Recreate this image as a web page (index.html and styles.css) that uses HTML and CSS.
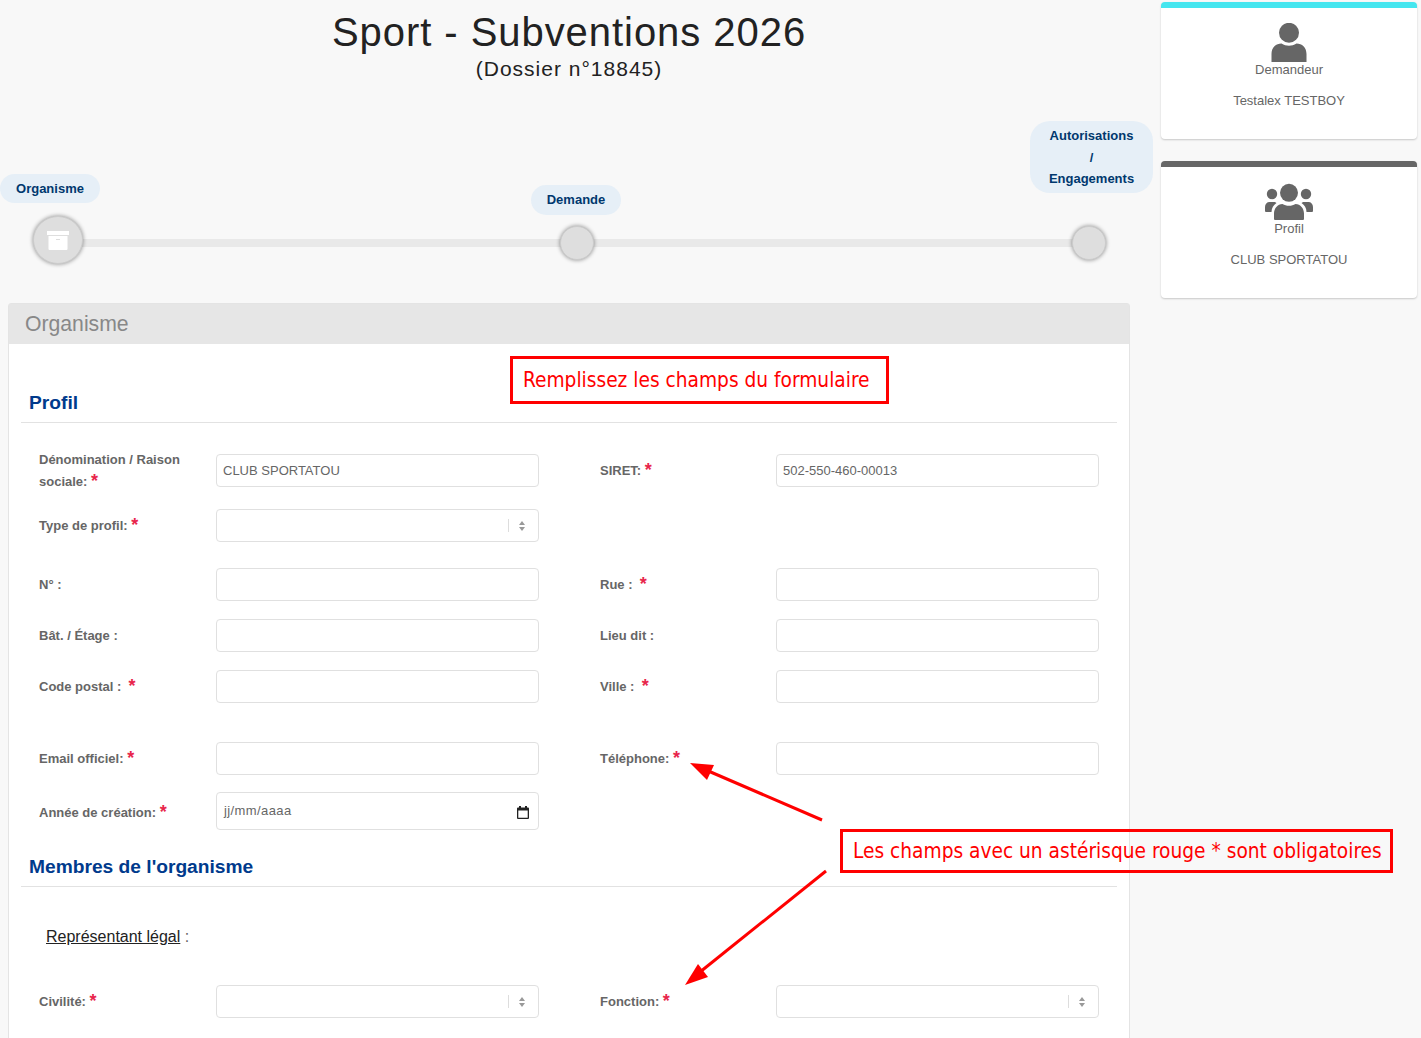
FILE: index.html
```html
<!DOCTYPE html>
<html lang="fr">
<head>
<meta charset="utf-8">
<title>Sport - Subventions 2026</title>
<link rel="stylesheet" href="styles.css">
</head>
<body>
<div class="page">
  <main class="main">
    <header class="head">
      <h1>Sport - Subventions 2026</h1>
      <p>(Dossier n°18845)</p>
    </header>
    <div class="stepper">
      <div class="track"></div>
      <div class="step step-one">
        <span class="pill">Organisme</span>
        <span class="dot dot-big">
          <svg width="22" height="19" viewBox="0 0 22 19"><path fill="#fff" d="M0 0h22v4H0zM1.500 5h19v13a1 1 0 0 1-1 1h-17a1 1 0 0 1-1-1z"/><path fill="#ddd" d="M9 8h4v1H9z"/></svg>
        </span>
      </div>
      <div class="step step-two">
        <span class="pill">Demande</span>
        <span class="dot"></span>
      </div>
      <div class="step step-three">
        <span class="pill">Autorisations<br>/<br>Engagements</span>
        <span class="dot"></span>
      </div>
    </div>
    <section class="card">
      <div class="card-head">Organisme</div>
      <div class="card-body">
        <h2 class="sect sect-first">Profil</h2>
        <div class="row row-first">
          <label class="label-two">Dénomination / Raison sociale: <b>*</b></label>
          <input class="field" value="CLUB SPORTATOU">
          <label class="second">SIRET: <b>*</b></label>
          <input class="field last" value="502-550-460-00013">
        </div>
        <div class="row gap16">
          <label>Type de profil: <b>*</b></label>
          <div class="field select"><i></i><svg width="6" height="10" viewBox="0 0 6 10"><path fill="#999" d="M3 0l3 4H0zM3 10L0 6h6z"/></svg></div>
        </div>
        <div class="row gap26">
          <label>N° :</label>
          <input class="field">
          <label class="second">Rue : &nbsp;<b>*</b></label>
          <input class="field last">
        </div>
        <div class="row gap18">
          <label>Bât. / Étage :</label>
          <input class="field">
          <label class="second">Lieu dit :</label>
          <input class="field last">
        </div>
        <div class="row gap18">
          <label>Code postal : &nbsp;<b>*</b></label>
          <input class="field">
          <label class="second">Ville : &nbsp;<b>*</b></label>
          <input class="field last">
        </div>
        <div class="row gap39">
          <label>Email officiel: <b>*</b></label>
          <input class="field">
          <label class="second">Téléphone: <b>*</b></label>
          <input class="field last">
        </div>
        <div class="row gap17">
          <label class="label-low">Année de création: <b>*</b></label>
          <div class="field date"><span>jj/mm/aaaa</span><svg width="12" height="13" viewBox="0 0 12 13"><path fill="#222" d="M2 0h2v1.500h4V0h2v1.500h1a1 1 0 0 1 1 1V12a1 1 0 0 1-1 1H1a1 1 0 0 1-1-1V2.500a1 1 0 0 1 1-1h1zM1.300 4.500v7.200h9.400V4.500z"/></svg></div>
        </div>
        <h2 class="sect">Membres de l'organisme</h2>
        <p class="legal"><u>Représentant légal</u> :</p>
        <div class="row">
          <label>Civilité: <b>*</b></label>
          <div class="field select"><i></i><svg width="6" height="10" viewBox="0 0 6 10"><path fill="#999" d="M3 0l3 4H0zM3 10L0 6h6z"/></svg></div>
          <label class="second">Fonction: <b>*</b></label>
          <div class="field select last"><i></i><svg width="6" height="10" viewBox="0 0 6 10"><path fill="#999" d="M3 0l3 4H0zM3 10L0 6h6z"/></svg></div>
        </div>
      </div>
    </section>
  </main>
  <aside class="side">
    <div class="tile tile-cyan">
      <svg class="tile-icon" width="36" height="39" viewBox="0 0 36 39"><circle cx="18" cy="9.800" r="10" fill="#666"/><path fill="#666" d="M.5 39V31c0-6.500 4.500-10.500 10-10.500 2.500 1.500 4.800 2.200 7.500 2.200s5-.7 7.500-2.200c5.500 0 10 4 10 10.500v8z"/></svg>
      <div class="tile-label">Demandeur</div>
      <div class="tile-name">Testalex TESTBOY</div>
    </div>
    <div class="tile tile-dark">
      <svg class="tile-icon" width="50" height="39" viewBox="0 0 50 39"><circle cx="25" cy="10.800" r="9" fill="#666"/><circle cx="8" cy="12" r="5.200" fill="#666"/><circle cx="42" cy="12" r="5.200" fill="#666"/><path fill="#666" d="M10 37v-5.500c0-5 3.500-9.500 8.500-9.500 2 1.200 4 1.800 6.500 1.800s4.500-.6 6.500-1.800c5 0 8.500 4.500 8.500 9.500V37a1 1 0 0 1-1 1H11a1 1 0 0 1-1-1z"/><path fill="#666" d="M1 29v-4c0-3 2-5 4.500-5h4c1.500 0 2.500.5 3 1-3 2-5 5-5 9H2a1 1 0 0 1-1-1zM49 29v-4c0-3-2-5-4.500-5h-4c-1.500 0-2.500.5-3 1 3 2 5 5 5 9H48a1 1 0 0 0 1-1z"/></svg>
      <div class="tile-label">Profil</div>
      <div class="tile-name">CLUB SPORTATOU</div>
    </div>
  </aside>
</div>
<div class="note note-top">Remplissez les champs du formulaire</div>
<div class="note note-bottom">Les champs avec un astérisque rouge * sont obligatoires</div>
<svg class="arrows" width="1421" height="1038" viewBox="0 0 1421 1038">
  <path d="M822 820L706 770" stroke="#f00" stroke-width="3" fill="none"/>
  <path d="M690 763L714 765L707 780z" fill="#f00"/>
  <path d="M826 871L700 972" stroke="#f00" stroke-width="3" fill="none"/>
  <path d="M685 985L698 964L708 977z" fill="#f00"/>
</svg>
</body>
</html>
```
FILE: styles.css
```css
* { box-sizing: border-box; }
html, body { margin: 0; height: 1038px; overflow: hidden; }
body {
  background: #f8f8f8;
  font-family: "Liberation Sans", Arial, sans-serif;
  color: #666;
  position: relative;
}
.page { display: flex; align-items: flex-start; }
.main { width: 1153px; flex: none; }
.side { width: 256px; margin-left: 8px; padding-top: 2px; flex: none; }

.head { width: 1138px; text-align: center; padding-top: 10px; color: #222; }
.head h1 { margin: 0; font-size: 40px; line-height: 44px; font-weight: 400; letter-spacing: .95px; }
.head p { margin: 2px 0 0; font-size: 21px; line-height: 26px; letter-spacing: 1px; }

.stepper { position: relative; display: flex; align-items: flex-end; margin-top: 39px; height: 143px; }
.track { position: absolute; left: 70px; width: 1010px; top: 118px; height: 8px; background: #e9e9e9; }
.step { position: relative; display: flex; flex-direction: column; align-items: center; flex: none; }
.pill {
  display: block; background: #e6eff7; color: #00386e;
  font-size: 13px; font-weight: 700; text-align: center; border-radius: 15px;
}
.dot {
  display: flex; align-items: center; justify-content: center;
  width: 34px; height: 34px; border-radius: 50%;
  background: #dedede; border: 1px solid #ccc; box-shadow: 0 0 4px rgba(0,0,0,.45);
}
.dot-big { width: 50px; height: 48px; margin-top: 13px; align-self: flex-start; margin-left: 33px; }
.step-one { width: 100px; }
.step-one .pill { width: 100px; height: 29px; line-height: 29px; }
.step-two { width: 90px; margin-left: 431px; margin-bottom: 4px; }
.step-two .pill { width: 90px; height: 30px; line-height: 30px; margin-bottom: 11px; }
.step-two .dot { margin-left: 1px; }
.step-three { width: 123px; margin-left: 409px; margin-bottom: 4px; }
.step-three .pill { width: 123px; height: 72px; padding-top: 4px; line-height: 21.600px; border-radius: 20px; margin-bottom: 33px; }
.step-three .dot { margin-right: 6px; }

.card { width: 1122px; margin: 39px 0 0 8px; height: 760px; background: #fff; border: 1px solid #e4e4e4; border-top-left-radius: 3px; border-top-right-radius: 3px; }
.card-head { height: 40px; background: #e6e6e6; color: #888; font-size: 21.200px; line-height: 40px; padding-left: 16px; }
.card-body { padding: 0 12px; }

.sect { margin: 0; color: #003a8c; font-size: 19.200px; line-height: 24px; font-weight: 700; padding: 25px 8px 7px; border-bottom: 1px solid #e2e2e2; }
.sect-first { padding-top: 47px; }

.row { display: grid; grid-template-columns: 177px 323px 61px 176px 323px; padding-left: 18px; align-items: center; }
.row > .second { grid-column: 4; }
.row > .last { grid-column: 5; }
.row-first { margin-top: 25px; }
.gap16 { margin-top: 16px; }
.gap26 { margin-top: 26px; }
.gap18 { margin-top: 18px; }
.gap39 { margin-top: 39px; }
.gap17 { margin-top: 17px; }

label { font-size: 13px; font-weight: 700; line-height: 22px; color: #666; }
label b { color: #e8254b; font-size: 18px; line-height: 14px; vertical-align: -1px; }
.label-low { padding-top: 3px; }
.label-two { padding-top: 1px; }

.field {
  display: block; width: 323px; height: 33px; background: #fff;
  border: 1px solid #e0e0e0; border-radius: 4px;
  font: 13px "Liberation Sans", Arial, sans-serif; color: #666;
  padding: 0 6px; outline: none;
}
.select { display: flex; align-items: center; justify-content: flex-end; padding-right: 13px; }
.select i { width: 1px; height: 13px; background: #ddd; margin-right: 10px; }
.date { display: flex; height: 38px; justify-content: space-between; padding: 10px 9px 0 7px; line-height: 16px; letter-spacing: .4px; }
.date svg { margin-top: 3px; }

.legal { margin: 40px 0 38px; padding-left: 25px; font-size: 16px; line-height: 20px; color: #666; }
.legal u { color: #222; }

.tile { height: 137px; background: #fff; border-radius: 4px; box-shadow: 0 1px 2px rgba(0,0,0,.2); text-align: center; border-top: 6px solid; padding-top: 15px; font-size: 13px; line-height: 16px; color: #666; }
.tile-cyan { border-top-color: #45e6ef; }
.tile-dark { border-top-color: #666; margin-top: 22px; }
.tile-icon { display: block; margin: 0 auto; }
.tile-name { margin-top: 15px; }

.note {
  position: absolute; border: 3px solid #f00; color: #f00;
  font-family: "DejaVu Sans", sans-serif; font-stretch: condensed; font-size: 20.700px; white-space: nowrap;
  display: flex; align-items: center; padding-left: 10px;
}
.note-top { left: 510px; top: 356px; width: 379px; height: 48px; }
.note-bottom { left: 840px; top: 829px; width: 553px; height: 44px; }
.arrows { position: absolute; left: 0; top: 0; pointer-events: none; }
```
